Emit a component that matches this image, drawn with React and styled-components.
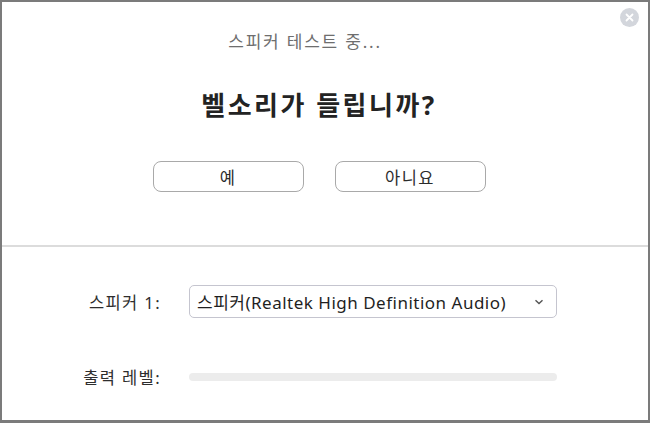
import React from "react";
import styled, { createGlobalStyle } from "styled-components";

const Global = createGlobalStyle`
  html, body { margin: 0; padding: 0; background: #fff; }
  body { font-family: "Noto Sans", "Noto Sans CJK KR", sans-serif; }
`;

const Window = styled.div`
  position: relative;
  width: 650px;
  height: 423px;
  box-sizing: border-box;
  border: 2px solid #7b7b7b;
  border-bottom-width: 3px;
  background: #fff;
  display: flex;
  flex-direction: column;
`;

const Close = styled.button`
  position: absolute;
  top: 6px;
  right: 9px;
  width: 19px;
  height: 19px;
  padding: 0;
  border: none;
  border-radius: 50%;
  background: #d3d6dc;
  display: flex;
  align-items: center;
  justify-content: center;
`;

const Top = styled.section`
  height: 243px;
  display: flex;
  flex-direction: column;
  align-items: center;
  padding: 29px 12px 0 0;
  box-sizing: border-box;
`;

const Title = styled.div`
  margin-right: 28px;
  font-size: 17px;
  line-height: 22px;
  letter-spacing: 1.8px;
  color: #6e6e6e;
`;

const Question = styled.h1`
  margin: 35px 0 0;
  font-size: 26px;
  line-height: 34px;
  letter-spacing: 2.5px;
  font-weight: 700;
  color: #232323;
`;

const Buttons = styled.div`
  display: flex;
  gap: 31px;
  margin-top: 39px;
`;

const Btn = styled.button`
  width: 151px;
  height: 31px;
  box-sizing: border-box;
  border: 1px solid #a9a9a9;
  border-radius: 8px;
  background: #fff;
  font-family: inherit;
  font-size: 16.5px;
  letter-spacing: 1.5px;
  color: #2b2b2b;
  padding: 0;
`;

const Divider = styled.hr`
  margin: 0;
  border: none;
  height: 2px;
  background: #dcdcdc;
`;

const Bottom = styled.section`
  display: grid;
  grid-template-columns: 159px 368px;
  column-gap: 28px;
  align-items: center;
  row-gap: 47px;
  padding-top: 38px;
`;

const Label = styled.div`
  text-align: right;
  font-size: 16.5px;
  letter-spacing: 1.4px;
  color: #2e2e2e;
`;

const Select = styled.div`
  height: 33px;
  box-sizing: border-box;
  border: 1px solid #c5c5cf;
  border-radius: 5px;
  display: flex;
  align-items: center;
  justify-content: space-between;
  padding: 0 12px 0 7px;
  font-size: 17px;
  letter-spacing: 0.5px;
  color: #1f1f1f;
  white-space: nowrap;
`;

const Level = styled.div`
  height: 8px;
  border-radius: 4px;
  background: #ececec;
`;

export default function App() {
  return (
    <>
      <Global />
      <Window>
        <Close aria-label="닫기">
          <svg width="9" height="9" viewBox="0 0 9 9">
            <path d="M1.5 1.5l6 6M7.5 1.5l-6 6" stroke="#fff" strokeWidth="1.8" strokeLinecap="round" />
          </svg>
        </Close>
        <Top>
          <Title>스피커 테스트 중...</Title>
          <Question>벨소리가 들립니까?</Question>
          <Buttons>
            <Btn>예</Btn>
            <Btn>아니요</Btn>
          </Buttons>
        </Top>
        <Divider />
        <Bottom>
          <Label>스피커 1:</Label>
          <Select>
            <span>스피커(Realtek High Definition Audio)</span>
            <svg width="10" height="6" viewBox="0 0 10 6">
              <path d="M1.5 1.2l3.5 3.4 3.5-3.4" fill="none" stroke="#555" strokeWidth="1.4" />
            </svg>
          </Select>
          <Label>출력 레벨:</Label>
          <Level />
        </Bottom>
      </Window>
    </>
  );
}
